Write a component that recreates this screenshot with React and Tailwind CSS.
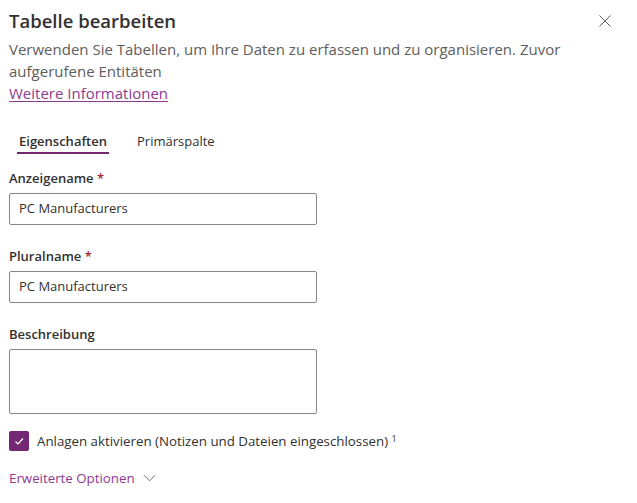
import React from "react";

export default function App() {
  return (
    <div className="w-[637px] h-[503px] bg-white text-[#323130] relative overflow-hidden" style={{ fontFamily: '"Open Sans", "Noto Sans", sans-serif' }}>
      <button className="absolute left-[598px] top-[14px] w-[14px] h-[14px] text-[#605e5c]">
        <svg viewBox="0 0 14 14" width="14" height="14" fill="none" stroke="currentColor" strokeWidth="1">
          <path d="M1.5 1.5 L12.5 12.5 M12.5 1.5 L1.5 12.5" />
        </svg>
      </button>
      <div className="pl-[9px] pr-[20px] pt-[7px]">
        <h1 className="text-[18.5px] leading-[28px] font-semibold text-[#323130]">Tabelle bearbeiten</h1>
        <p className="mt-[3px] text-[15px] leading-[22px] text-[#605e5c] w-[570px]">
          Verwenden Sie Tabellen, um Ihre Daten zu erfassen und zu organisieren. Zuvor aufgerufene Entitäten
        </p>
        <a className="block text-[15px] leading-[22px] text-[#8e3a90] underline underline-offset-2">Weitere Informationen</a>

        <div className="mt-[27px] flex text-[13px] pl-[8px]">
          <div className="flex flex-col items-center">
            <span className="px-[2px] font-semibold leading-[20px] text-[#323130]">Eigenschaften</span>
            <span className="mt-[1px] h-[2px] w-full bg-[#742774]"></span>
          </div>
          <div className="pl-[28px]">
            <span className="leading-[20px] text-[#323130]">Primärspalte</span>
          </div>
        </div>

        <div className="mt-[14px] w-[308px]">
          <label className="block text-[13px] font-semibold leading-[20px]">
            Anzeigename <span className="text-[#a4262c]">*</span>
          </label>
          <div className="mt-[5px] h-[32px] border border-[#8a8886] rounded-[2px] flex items-center pl-[9px] text-[13px]">
            PC Manufacturers
          </div>

          <label className="mt-[21px] block text-[13px] font-semibold leading-[20px]">
            Pluralname <span className="text-[#a4262c]">*</span>
          </label>
          <div className="mt-[5px] h-[32px] border border-[#8a8886] rounded-[2px] flex items-center pl-[9px] text-[13px]">
            PC Manufacturers
          </div>

          <label className="mt-[21px] block text-[13px] font-semibold leading-[20px]">Beschreibung</label>
          <div className="mt-[5px] h-[65px] border border-[#8a8886] rounded-[2px]"></div>
        </div>

        <div className="mt-[17px] flex items-center gap-[8px]">
          <span className="w-[20px] h-[20px] rounded-[2px] bg-[#742774] flex items-center justify-center">
            <svg viewBox="0 0 12 12" width="12" height="12" fill="none" stroke="white" strokeWidth="1.2">
              <path d="M2.5 6.5 L5 9 L10 3.5" />
            </svg>
          </span>
          <span className="text-[13.3px] leading-[20px] text-[#323130]">
            Anlagen aktivieren (Notizen und Dateien eingeschlossen) <sup className="text-[9px]">1</sup>
          </span>
        </div>

        <div className="mt-[17px] flex items-center gap-[8px] text-[13.3px] text-[#8e3a90]">
          <span className="leading-[20px]">Erweiterte Optionen</span>
          <svg viewBox="0 0 14 8" width="13" height="8" fill="none" stroke="#605e5c" strokeWidth="1">
            <path d="M1 1 L7 7 L13 1" />
          </svg>
        </div>
      </div>
    </div>
  );
}
